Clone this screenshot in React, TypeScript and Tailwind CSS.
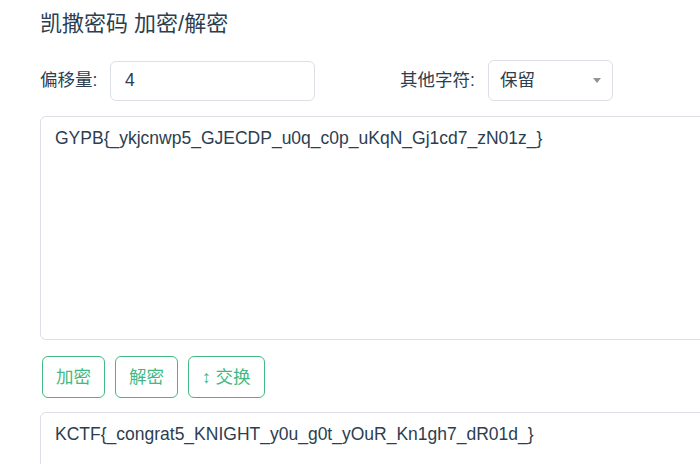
import React, { useState } from 'react';

const font = { fontFamily: '"Liberation Sans", Arial, "Noto Sans CJK SC", sans-serif' };

const App = () => {
  const [shift, setShift] = useState('4');
  const [input, setInput] = useState('GYPB{_ykjcnwp5_GJECDP_u0q_c0p_uKqN_Gj1cd7_zN01z_}');
  const [output, setOutput] = useState('KCTF{_congrat5_KNIGHT_y0u_g0t_yOuR_Kn1gh7_dR01d_}');

  return (
    <div className="w-[700px] h-[464px] overflow-hidden bg-white text-[#2c3e50]" style={font}>
      <div className="w-[900px] pl-10 pt-[9px]">
        <h1 className="text-[22px] leading-[30px] font-normal">凯撒密码 加密/解密</h1>

        <div className="flex items-center mt-[21px]">
          <label className="text-[17.5px] w-[70px]">偏移量:</label>
          <input
            value={shift}
            onChange={(e) => setShift(e.target.value)}
            className="w-[205px] h-[40px] px-[14px] border border-[#dcdfe6] rounded-md text-[17.5px] outline-none"
          />
          <label className="text-[17.5px] ml-[85px] w-[88px]">其他字符:</label>
          <div className="relative w-[125px] h-[41px] border border-[#dcdfe6] rounded-md flex items-center px-[11px]">
            <span className="text-[17.5px]">保留</span>
            <span className="absolute right-[11px] top-[17px] w-0 h-0 border-l-[4px] border-r-[4px] border-t-[5px] border-l-transparent border-r-transparent border-t-[#909399]" />
          </div>
        </div>

        <textarea
          value={input}
          onChange={(e) => setInput(e.target.value)}
          className="block mt-[15px] w-full h-[224px] border border-[#dcdfe6] rounded-md px-[14px] pt-[8px] text-[17.5px] resize-none outline-none"
        />

        <div className="flex gap-[10px] mt-[16px] ml-[2px]">
          <button className="h-[42px] px-[13px] border border-[#42b983] rounded-md text-[#42b983] text-[17.5px] bg-white">加密</button>
          <button className="h-[42px] px-[13px] border border-[#42b983] rounded-md text-[#42b983] text-[17.5px] bg-white">解密</button>
          <button className="h-[42px] px-[13px] border border-[#42b983] rounded-md text-[#42b983] text-[17.5px] bg-white">↕ 交换</button>
        </div>

        <textarea
          value={output}
          onChange={(e) => setOutput(e.target.value)}
          className="block mt-[14px] w-full h-[225px] border border-[#dcdfe6] rounded-md px-[14px] pt-[8px] text-[17.5px] resize-none outline-none"
        />
      </div>
    </div>
  );
};

export default App;
